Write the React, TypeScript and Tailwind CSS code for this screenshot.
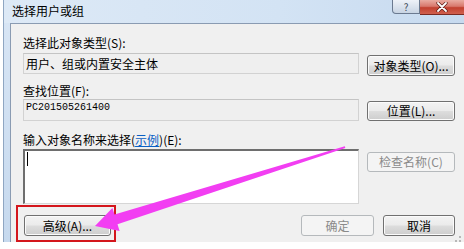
import React from 'react'

const cjk = { fontFamily: '"Noto Sans CJK SC", "Noto Sans", sans-serif' }

// Win7 风格按钮
function Btn({ children, disabled = false, className = '' }: { children: React.ReactNode; disabled?: boolean; className?: string }) {
  return (
    <div
      className={[
        'flex items-center justify-center rounded-[3px] border text-[12px] leading-none shrink-0',
        disabled
          ? 'border-[#b5b9bc] bg-[#f4f4f4] text-[#8a8a8a]'
          : 'border-[#707070] text-black bg-[linear-gradient(to_bottom,#f3f3f3_0%,#ebebeb_48%,#dddddd_52%,#cdcdcd_100%)] shadow-[inset_0_0_0_1px_#fbfbfb]',
        className
      ].join(' ')}
    >
      {children}
    </div>
  )
}

function Label({ children }: { children: React.ReactNode }) {
  return <div className="h-[16px] leading-[16px] text-[12px] text-black whitespace-nowrap">{children}</div>
}

export default function App() {
  return (
    <div className="w-[464px] h-[249px] bg-white relative overflow-hidden" style={cjk}>
      {/* 窗口 */}
      <div className="h-[242px] ml-[3px] flex flex-col border-l border-[#8fa6c2] bg-[linear-gradient(to_bottom,#d9e6f5,#c6d9ee)]">
        {/* 标题栏 */}
        <div className="h-[23px] flex items-start bg-[linear-gradient(to_right,#dde9f6_0%,#d3e3f4_60%,#c7daef_100%)]">
          <div className="pl-[8px] pt-[3px] text-[12px] leading-[16px] text-black">选择用户或组</div>
          <div className="ml-auto flex items-start">
            <div className="w-[28px] h-[14px] border border-t-0 border-[#6b7a90] rounded-bl-[4px] bg-[linear-gradient(to_bottom,#eef2f8,#c8d4e3)] flex items-center justify-center text-[10px] leading-none text-[#404a58]">
              ?
            </div>
            <div className="w-[44px] h-[15px] border-b border-[#7a2a22] bg-[linear-gradient(to_bottom,#e9aca2_0%,#d8786c_45%,#c2402f_55%,#d0604e_100%)] flex items-center justify-center">
              <svg width="12" height="10" viewBox="0 0 12 10">
                <path d="M2 1 L10 9 M10 1 L2 9" stroke="#5a1a14" strokeWidth="3.2" strokeLinecap="round" />
                <path d="M2 1 L10 9 M10 1 L2 9" stroke="#ffffff" strokeWidth="1.8" strokeLinecap="round" />
              </svg>
            </div>
          </div>
        </div>

        {/* 内容区 */}
        <div className="flex-1 ml-[6px] border-l border-t border-[#8a9bb2] bg-[#f0f0f0] pl-[12px] pr-[9px] pt-[11px] pb-[5px] flex flex-col">
          <Label>选择此对象类型(S):</Label>
          <div className="mt-[2px] flex items-start gap-[8px]">
            <div className="w-[337px] h-[21px] border border-[#d2d2d2] border-t-[#c4c4c4] bg-[#efefef] pl-[2px] text-[12px] leading-[19px] text-black">
              用户、组或内置安全主体
            </div>
            <Btn className="mt-[2px] w-[88px] h-[21px]">对象类型(O)...</Btn>
          </div>

          <div className="mt-[7px]">
            <Label>查找位置(F):</Label>
          </div>
          <div className="flex items-start gap-[8px]">
            <div className="w-[337px] h-[22px] border border-[#d2d2d2] border-t-[#c4c4c4] bg-[#efefef] pl-[2px] pt-[1px] text-[10px] leading-[14px] text-black" style={{ fontFamily: '"Liberation Mono", monospace' }}>
              PC201505261400
            </div>
            <Btn className="mt-[2px] w-[88px] h-[20px]">位置(L)...</Btn>
          </div>

          <div className="mt-[11px]">
            <Label>
              输入对象名称来选择(<span className="text-[#0a5fc4] underline">示例</span>)(E):
            </Label>
          </div>
          <div className="mt-[1px] flex items-start gap-[8px]">
            <div className="w-[337px] h-[55px] bg-white border-t-2 border-l-2 border-[#6e6e6e] border-r border-b border-r-[#d6d6d6] border-b-[#d6d6d6] pl-[2px] pt-[1px]">
              <div className="w-px h-[14px] bg-black" />
            </div>
            <Btn disabled className="mt-[3px] w-[88px] h-[20px]">检查名称(C)</Btn>
          </div>

          <div className="mt-[11px] flex items-start">
            <Btn className="ml-[1px] w-[87px] h-[21px]">高级(A)...</Btn>
            <div className="ml-auto flex gap-[9px]">
              <Btn disabled className="w-[73px] h-[21px]">确定</Btn>
              <Btn className="w-[72px] h-[21px]">取消</Btn>
            </div>
          </div>
        </div>
      </div>

      {/* 调整大小的点 */}
      <div className="absolute left-[459px] top-[236px] w-[2px] h-[2px] bg-[#b8b8b8]" />
      <div className="absolute left-[459px] top-[240px] w-[2px] h-[2px] bg-[#b8b8b8]" />
      <div className="absolute left-[455px] top-[240px] w-[2px] h-[2px] bg-[#b8b8b8]" />

      {/* 红框标注 */}
      <div className="absolute left-[16px] top-[205px] w-[100px] h-[37px] border-2 border-[#d4161c]" />

      {/* 粉色箭头 */}
      <svg className="absolute inset-0 pointer-events-none" width="464" height="249" viewBox="0 0 464 249">
        <polygon
          points="95,226 112.4,207.9 114.5,214.6 344.8,146.2 345.3,148 117.5,224.2 119.6,230.9"
          fill="#f23ef2"
        />
      </svg>
    </div>
  )
}
